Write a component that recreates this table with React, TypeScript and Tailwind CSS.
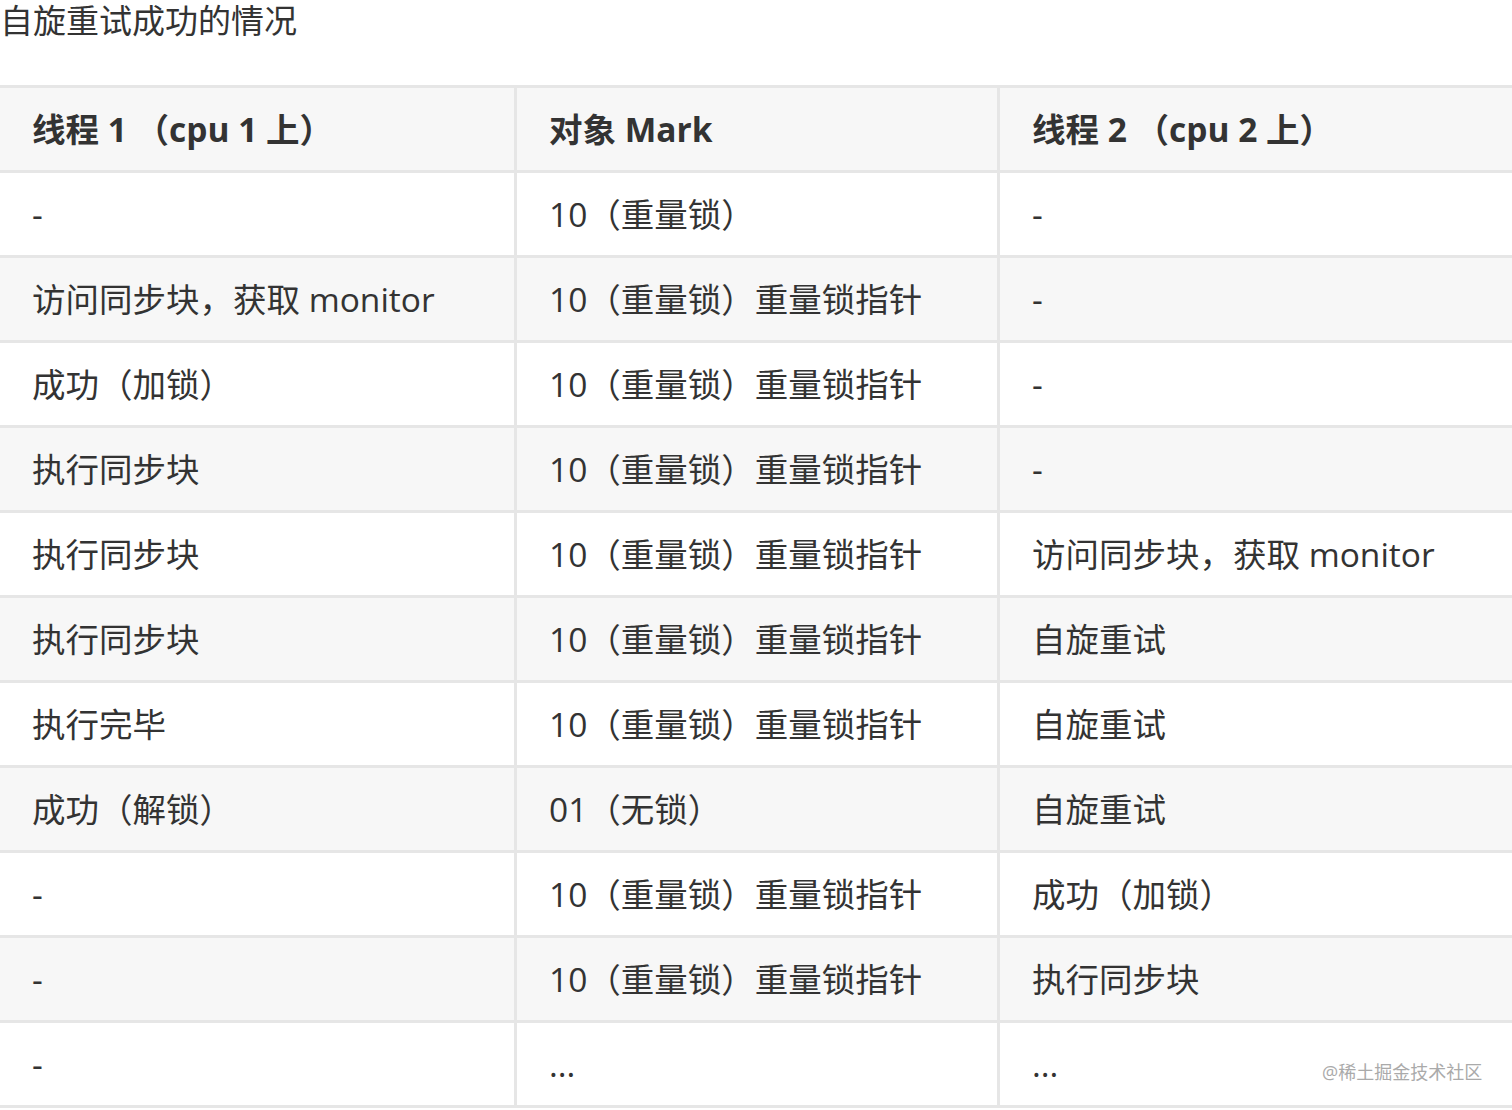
const rows: [string, string, string][] = [
  ["-", "10（重量锁）", "-"],
  ["访问同步块，获取 monitor", "10（重量锁）重量锁指针", "-"],
  ["成功（加锁）", "10（重量锁）重量锁指针", "-"],
  ["执行同步块", "10（重量锁）重量锁指针", "-"],
  ["执行同步块", "10（重量锁）重量锁指针", "访问同步块，获取 monitor"],
  ["执行同步块", "10（重量锁）重量锁指针", "自旋重试"],
  ["执行完毕", "10（重量锁）重量锁指针", "自旋重试"],
  ["成功（解锁）", "01（无锁）", "自旋重试"],
  ["-", "10（重量锁）重量锁指针", "成功（加锁）"],
  ["-", "10（重量锁）重量锁指针", "执行同步块"],
  ["-", "...", "..."],
];

const cell = "h-[85px] px-[32px] border-[3px] border-[#e6e6e6] text-left align-middle whitespace-nowrap";

export default function App() {
  return (
    <div
      className="relative w-[1512px] h-[1110px] overflow-hidden bg-white text-[#333]"
      style={{ fontFamily: '"Open Sans", "Noto Sans CJK SC", sans-serif' }}
    >
      {/* Title */}
      <p className="text-[33px] leading-[42px]">自旋重试成功的情况</p>

      {/* Table */}
      <table className="mt-[43px] -ml-[3px] border-collapse table-fixed w-[1520px] text-[33.5px]">
        <colgroup>
          <col className="w-[517px]" />
          <col className="w-[483px]" />
          <col />
        </colgroup>
        <thead>
          <tr className="bg-[#f7f7f7]">
            <th className={`${cell} font-bold`}>线程 1 （cpu 1 上）</th>
            <th className={`${cell} font-bold`}>对象 Mark</th>
            <th className={`${cell} font-bold`}>线程 2 （cpu 2 上）</th>
          </tr>
        </thead>
        <tbody>
          {rows.map((r, i) => (
            <tr key={i} className={i % 2 === 1 ? "bg-[#f7f7f7]" : "bg-white"}>
              {r.map((c, j) => (
                <td key={j} className={cell}>
                  {c}
                </td>
              ))}
            </tr>
          ))}
        </tbody>
      </table>

      {/* Watermark */}
      <span className="absolute left-[1322px] top-[1059px] text-[18px] text-[#aaa]">
        @稀土掘金技术社区
      </span>
    </div>
  );
}
